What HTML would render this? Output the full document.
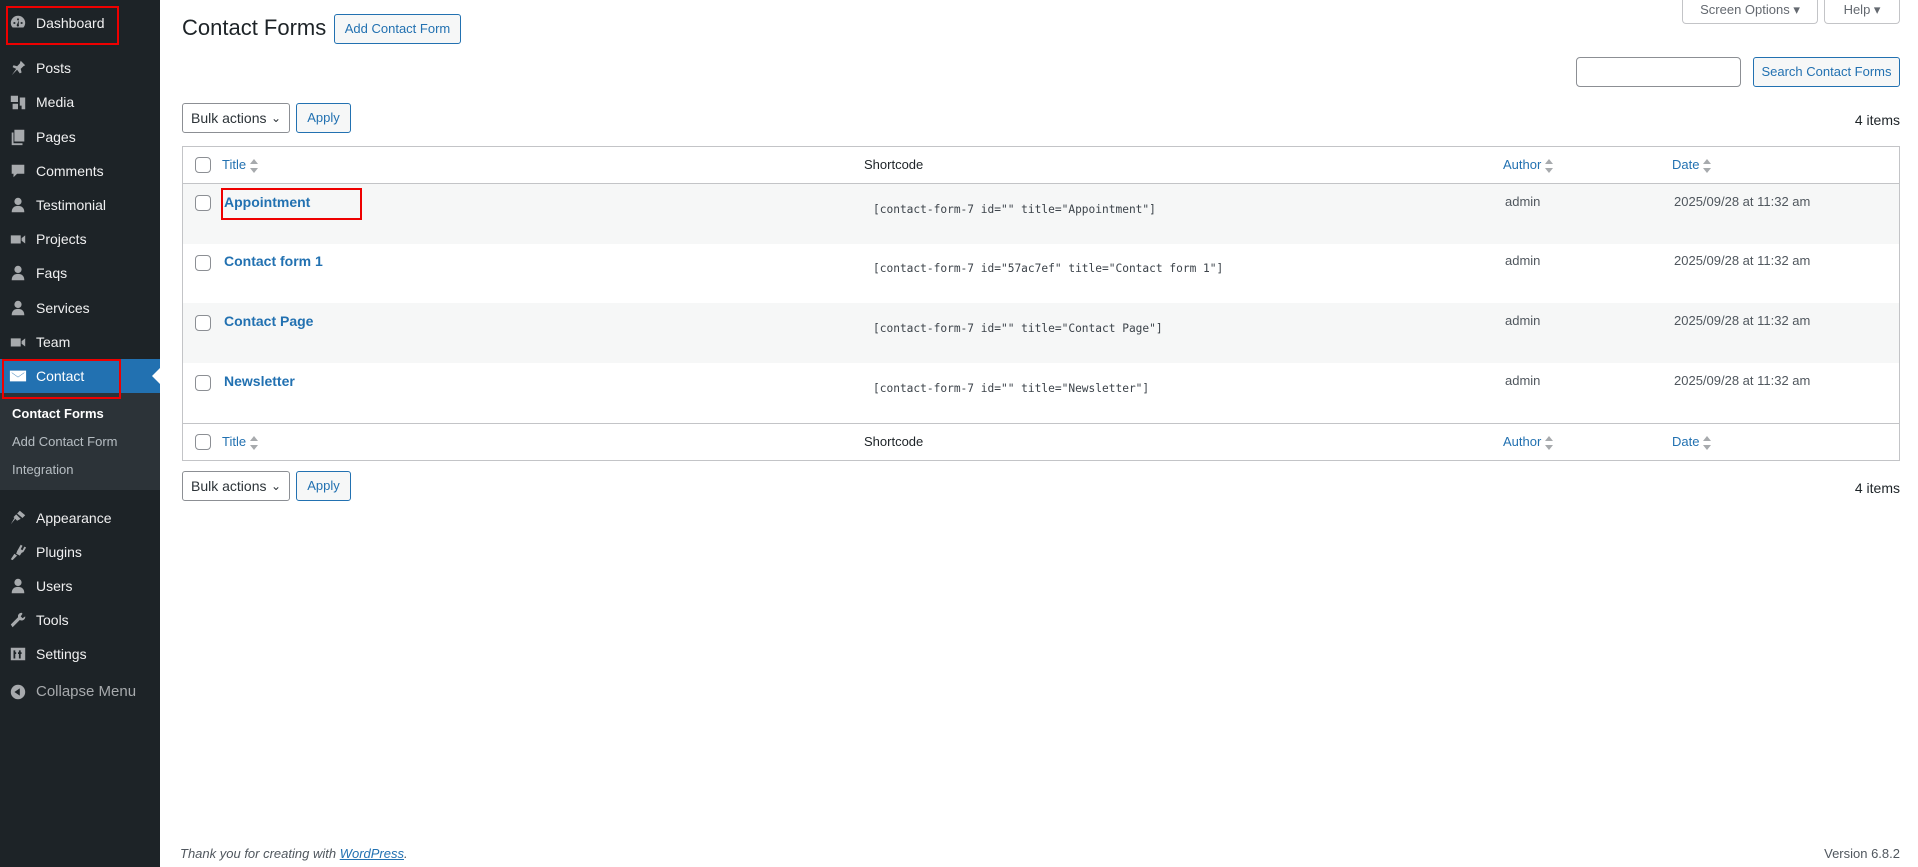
<!DOCTYPE html>
<html><head><meta charset="utf-8"><style>
*{box-sizing:border-box;margin:0;padding:0}
body{width:1918px;height:867px;overflow:hidden;background:#fff;font-family:"Liberation Sans",sans-serif;font-size:13px;color:#1d2327;position:relative}
.side{position:absolute;left:0;top:0;width:160px;height:867px;background:#1d2327}
.mi{position:absolute;left:0;width:160px;height:34px;color:#f0f0f1;font-size:14px;line-height:34px;padding-left:36px}
.ic{position:absolute;left:9px;top:8px;width:18px;height:18px;fill:#a7aaad}
.sub{position:absolute;left:0;top:393px;width:160px;height:97px;background:#2c3338}
.sub div{position:absolute;left:12px;font-size:13px;color:rgba(240,246,252,.7)}
.a{position:absolute}
.btn{position:absolute;border:1px solid #2271b1;color:#2271b1;background:#f6f7f7;border-radius:3px;font-size:13px;text-align:center}
.sel{position:absolute;border:1px solid #8c8f94;border-radius:3px;background:#fff;font-size:14px;padding-left:8px;color:#2c3338}
.red{position:absolute;border:2px solid #e00;}
.row{position:absolute;left:183px;width:1716px;height:60px}
.cb{position:absolute;width:16px;height:16px;border:1px solid #8c8f94;border-radius:4px;background:#fff}
.t{position:absolute;color:#2271b1;font-weight:bold;font-size:14px}
.mono{position:absolute;font-family:"DejaVu Sans Mono","Liberation Mono",monospace;font-size:11.2px;color:#3c434a}
.au,.dt{position:absolute;font-size:13px;color:#50575e}
.hd{position:absolute;font-size:13px;color:#2271b1}
.arr{display:inline-block;vertical-align:middle;margin-left:4px;width:8px;height:14px}
</style></head><body>
<div class="side">
 <div class="mi" style="top:6px"><svg class="ic" viewBox="0 0 20 20"><path d="M10 2a8 8 0 0 0-8 8c0 2 .7 3.7 2 5h12a8 8 0 0 0 2-5 8 8 0 0 0-8-8zm-1 3h2v2H9zM5 9h2v2H5zm8 0h2v2h-2zm-3 5a1.5 1.5 0 0 1-1-2.6L11 7l-.2 4.6A1.5 1.5 0 0 1 10 14z"/></svg>Dashboard</div>
 <div class="mi" style="top:51px"><svg class="ic" viewBox="0 0 20 20"><path d="M13 2l5 5-2 1-3 3 1 4-2 1-3-4-6 6 5-7-4-2 1-2 4 1 3-3z"/></svg>Posts</div>
 <div class="mi" style="top:85px"><svg class="ic" viewBox="0 0 20 20"><path d="M2 3h8v7H2zm10 2h6v13h-4v-4h-2zM4 12h6v6H4z"/></svg>Media</div>
 <div class="mi" style="top:120px"><svg class="ic" viewBox="0 0 20 20"><path d="M6 2h11v13H6zM3 5h2v12h10v2H3z"/></svg>Pages</div>
 <div class="mi" style="top:154px"><svg class="ic" viewBox="0 0 20 20"><path d="M3 3h14v10H9l-4 4v-4H3z"/></svg>Comments</div>
 <div class="mi" style="top:188px"><svg class="ic" viewBox="0 0 20 20"><circle cx="10" cy="6" r="4"/><path d="M3 18c0-5 3-7 7-7s7 2 7 7z"/></svg>Testimonial</div>
 <div class="mi" style="top:222px"><svg class="ic" viewBox="0 0 20 20"><path d="M2 6h11v9H2zm12 3l4-3v9l-4-3z"/></svg>Projects</div>
 <div class="mi" style="top:256px"><svg class="ic" viewBox="0 0 20 20"><circle cx="10" cy="6" r="4"/><path d="M3 18c0-5 3-7 7-7s7 2 7 7z"/></svg>Faqs</div>
 <div class="mi" style="top:291px"><svg class="ic" viewBox="0 0 20 20"><circle cx="10" cy="6" r="4"/><path d="M3 18c0-5 3-7 7-7s7 2 7 7z"/></svg>Services</div>
 <div class="mi" style="top:325px"><svg class="ic" viewBox="0 0 20 20"><path d="M2 6h11v9H2zm12 3l4-3v9l-4-3z"/></svg>Team</div>
 <div class="mi" style="top:359px;background:#2271b1;color:#fff"><svg class="ic" style="fill:#fff" viewBox="0 0 20 20"><path d="M1 4h18v12H1zm2 2v.5l7 5 7-5V6l-7 5z" fill-rule="evenodd"/></svg>Contact</div>
 <div style="position:absolute;left:152px;top:368px;width:0;height:0;border-top:8px solid transparent;border-bottom:8px solid transparent;border-right:8px solid #fff"></div>
 <div class="sub">
  <div style="top:13px;color:#fff;font-weight:bold">Contact Forms</div>
  <div style="top:41px">Add Contact Form</div>
  <div style="top:69px">Integration</div>
 </div>
 <div class="mi" style="top:501px"><svg class="ic" viewBox="0 0 20 20"><path d="M12 2l6 5-3 3-6-5zM8 6l5 5-4 2-2-2-5 6 4-7-1-1z"/></svg>Appearance</div>
 <div class="mi" style="top:535px"><svg class="ic" viewBox="0 0 20 20"><path d="M13 2l2 1-2 4 2 1 2-4 2 1-3 5-2 1-2 3-4-2 1-3zM6 12l3 2-5 5-2-1z"/></svg>Plugins</div>
 <div class="mi" style="top:569px"><svg class="ic" viewBox="0 0 20 20"><circle cx="10" cy="6" r="4"/><path d="M3 18c0-5 3-7 7-7s7 2 7 7z"/></svg>Users</div>
 <div class="mi" style="top:603px"><svg class="ic" viewBox="0 0 20 20"><path d="M14 2a4 4 0 0 0-4 5L2 15l2 3 8-8a4 4 0 0 0 6-4l-3 2-2-2 2-3z"/></svg>Tools</div>
 <div class="mi" style="top:637px"><svg class="ic" viewBox="0 0 20 20"><path d="M2 3h16v14H2zm3 3v9h2V10h1V8H7V6zm6 0v2h-1v2h1v5h2V10h1V8h-1V6z" fill-rule="evenodd"/></svg>Settings</div>
 <div class="mi" style="top:675px;color:#a7aaad;font-size:15px"><svg class="ic" viewBox="0 0 20 20"><path d="M10 2a8 8 0 1 0 0 16 8 8 0 0 0 0-16zm2 4v8L6 10z" fill-rule="evenodd"/></svg>Collapse Menu</div>
</div>
<div class="red" style="left:6px;top:6px;width:113px;height:39px"></div>
<div class="red" style="left:2px;top:359px;width:119px;height:40px"></div>

<div class="a" style="left:182px;top:15px;font-size:22px;color:#1d2327">Contact Forms</div>
<div class="btn" style="left:334px;top:14px;width:127px;height:30px;line-height:28px">Add Contact Form</div>

<div class="a" style="left:1682px;top:-1px;width:136px;height:25px;border:1px solid #c3c4c7;border-top:none;border-radius:0 0 4px 4px;color:#646970;text-align:center;line-height:22px">Screen Options ▾</div>
<div class="a" style="left:1824px;top:-1px;width:76px;height:25px;border:1px solid #c3c4c7;border-top:none;border-radius:0 0 4px 4px;color:#646970;text-align:center;line-height:22px">Help ▾</div>

<div class="a" style="left:1576px;top:57px;width:165px;height:30px;border:1px solid #8c8f94;border-radius:4px"></div>
<div class="btn" style="left:1753px;top:57px;width:147px;height:30px;line-height:28px">Search Contact Forms</div>

<div class="sel" style="left:182px;top:103px;width:108px;height:30px;line-height:28px">Bulk actions <span style="position:absolute;right:8px;top:0;font-size:12px">&#8964;</span></div>
<div class="btn" style="left:296px;top:103px;width:55px;height:30px;line-height:28px">Apply</div>
<div class="a" style="right:18px;top:112px;font-size:14px;color:#1d2327">4 items</div>

<div class="a" style="left:182px;top:146px;width:1718px;height:315px;border:1px solid #c3c4c7"></div>
<div class="a" style="left:183px;top:183px;width:1716px;height:1px;background:#c3c4c7"></div>
<div class="a" style="left:183px;top:423px;width:1716px;height:1px;background:#c3c4c7"></div>

<svg width="0" height="0" style="position:absolute"><defs><symbol id="so" viewBox="0 0 8 14"><path d="M4 0l4 5H0z M4 14l4-5H0z" fill="#a7aaad"/></symbol></defs></svg>

<div class="cb" style="left:195px;top:157px"></div>
<div class="hd" style="left:222px;top:157px">Title<svg class="arr"><use href="#so"/></svg></div>
<div class="a" style="left:864px;top:157px">Shortcode</div>
<div class="hd" style="left:1503px;top:157px">Author<svg class="arr"><use href="#so"/></svg></div>
<div class="hd" style="left:1672px;top:157px">Date<svg class="arr"><use href="#so"/></svg></div>

<div class="row" style="top:184px;background:#f6f7f7"></div>
<div class="row" style="top:303px;background:#f6f7f7"></div>

<div class="cb" style="left:195px;top:195px"></div><div class="t" style="left:224px;top:194px">Appointment</div>
<div class="mono" style="left:873px;top:203px">[contact-form-7 id="" title="Appointment"]</div>
<div class="au" style="left:1505px;top:194px">admin</div><div class="dt" style="left:1674px;top:194px">2025/09/28 at 11:32 am</div>

<div class="cb" style="left:195px;top:255px"></div><div class="t" style="left:224px;top:253px">Contact form 1</div>
<div class="mono" style="left:873px;top:262px">[contact-form-7 id="57ac7ef" title="Contact form 1"]</div>
<div class="au" style="left:1505px;top:253px">admin</div><div class="dt" style="left:1674px;top:253px">2025/09/28 at 11:32 am</div>

<div class="cb" style="left:195px;top:315px"></div><div class="t" style="left:224px;top:313px">Contact Page</div>
<div class="mono" style="left:873px;top:322px">[contact-form-7 id="" title="Contact Page"]</div>
<div class="au" style="left:1505px;top:313px">admin</div><div class="dt" style="left:1674px;top:313px">2025/09/28 at 11:32 am</div>

<div class="cb" style="left:195px;top:375px"></div><div class="t" style="left:224px;top:373px">Newsletter</div>
<div class="mono" style="left:873px;top:382px">[contact-form-7 id="" title="Newsletter"]</div>
<div class="au" style="left:1505px;top:373px">admin</div><div class="dt" style="left:1674px;top:373px">2025/09/28 at 11:32 am</div>

<div class="red" style="left:221px;top:188px;width:141px;height:32px"></div>

<div class="cb" style="left:195px;top:434px"></div>
<div class="hd" style="left:222px;top:434px">Title<svg class="arr"><use href="#so"/></svg></div>
<div class="a" style="left:864px;top:434px">Shortcode</div>
<div class="hd" style="left:1503px;top:434px">Author<svg class="arr"><use href="#so"/></svg></div>
<div class="hd" style="left:1672px;top:434px">Date<svg class="arr"><use href="#so"/></svg></div>

<div class="sel" style="left:182px;top:471px;width:108px;height:30px;line-height:28px">Bulk actions <span style="position:absolute;right:8px;top:0;font-size:12px">&#8964;</span></div>
<div class="btn" style="left:296px;top:471px;width:55px;height:30px;line-height:28px">Apply</div>
<div class="a" style="right:18px;top:480px;font-size:14px;color:#1d2327">4 items</div>

<div class="a" style="left:180px;top:846px;font-style:italic;color:#50575e">Thank you for creating with <span style="color:#2271b1;text-decoration:underline">WordPress</span>.</div>
<div class="a" style="right:18px;top:846px;color:#50575e">Version 6.8.2</div>
</body></html>
